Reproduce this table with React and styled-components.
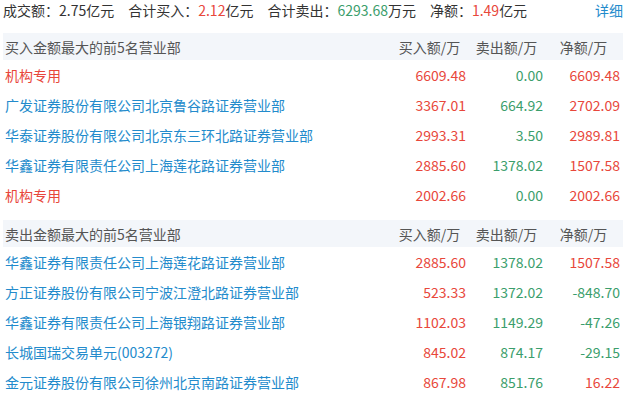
import React from "react";
import styled, { createGlobalStyle } from "styled-components";

const Global = createGlobalStyle`
  html, body { margin: 0; padding: 0; background: #fff; }
  body { font-family: "Noto Sans CJK SC", "Noto Sans", sans-serif; }
`;

const RED = "#e8473b";
const GREEN = "#3b9e6c";
const BLUE = "#238bcc";

const Page = styled.div`
  width: 620px;
  padding: 0 6px 0 3px;
  font-size: 14px;
  color: #333;
`;

const Summary = styled.div`
  display: flex;
  align-items: center;
  height: 21px;
  line-height: 21px;
  margin-bottom: 12px;
  white-space: nowrap;
`;

const SummaryItem = styled.span`
  margin-right: 14px;
`;

const Val = styled.span`
  color: ${(p) => p.$color};
`;

const DetailLink = styled.a`
  margin-left: auto;
  color: ${BLUE};
  text-decoration: none;
  cursor: pointer;
`;

const Section = styled.div`
  margin-bottom: 10px;
`;

const Row = styled.div`
  display: grid;
  grid-template-columns: 1fr 77px 77px 77px;
  align-items: center;
  padding: 0 3px 0 2px;
  height: 30px;
  white-space: nowrap;
`;

const HeadRow = styled(Row)`
  height: 27px;
  background: #f3f6fa;
  color: #555;
`;

const HeadCell = styled.div`
  text-align: ${(p) => (p.$center ? "center" : "left")};
  padding-left: ${(p) => (p.$center ? "4px" : "0")};
`;

const Name = styled.div`
  color: ${(p) => (p.$inst ? RED : BLUE)};
  cursor: pointer;
`;

const Num = styled.div`
  text-align: right;
  color: ${(p) => p.$color};
`;

const colorOf = (v) => (parseFloat(v) > 0 ? RED : GREEN);

const buyRows = [
  ["机构专用", "6609.48", "0.00", "6609.48", true],
  ["广发证券股份有限公司北京鲁谷路证券营业部", "3367.01", "664.92", "2702.09"],
  ["华泰证券股份有限公司北京东三环北路证券营业部", "2993.31", "3.50", "2989.81"],
  ["华鑫证券有限责任公司上海莲花路证券营业部", "2885.60", "1378.02", "1507.58"],
  ["机构专用", "2002.66", "0.00", "2002.66", true],
];

const sellRows = [
  ["华鑫证券有限责任公司上海莲花路证券营业部", "2885.60", "1378.02", "1507.58"],
  ["方正证券股份有限公司宁波江澄北路证券营业部", "523.33", "1372.02", "-848.70"],
  ["华鑫证券有限责任公司上海银翔路证券营业部", "1102.03", "1149.29", "-47.26"],
  ["长城国瑞交易单元(003272)", "845.02", "874.17", "-29.15"],
  ["金元证券股份有限公司徐州北京南路证券营业部", "867.98", "851.76", "16.22"],
];

function Table({ title, rows }) {
  return (
    <Section>
      <HeadRow>
        <HeadCell>{title}</HeadCell>
        <HeadCell $center>买入额/万</HeadCell>
        <HeadCell $center>卖出额/万</HeadCell>
        <HeadCell $center>净额/万</HeadCell>
      </HeadRow>
      {rows.map(([name, buy, sell, net, inst], i) => (
        <Row key={i}>
          <Name $inst={inst}>{name}</Name>
          <Num $color={RED}>{buy}</Num>
          <Num $color={GREEN}>{sell}</Num>
          <Num $color={colorOf(net)}>{net}</Num>
        </Row>
      ))}
    </Section>
  );
}

export default function App() {
  return (
    <Page>
      <Global />
      <Summary>
        <SummaryItem>成交额：2.75亿元</SummaryItem>
        <SummaryItem>
          合计买入：<Val $color={RED}>2.12</Val>亿元
        </SummaryItem>
        <SummaryItem>
          合计卖出：<Val $color={GREEN}>6293.68</Val>万元
        </SummaryItem>
        <SummaryItem>
          净额：<Val $color={RED}>1.49</Val>亿元
        </SummaryItem>
        <DetailLink>详细</DetailLink>
      </Summary>
      <Table title="买入金额最大的前5名营业部" rows={buyRows} />
      <Table title="卖出金额最大的前5名营业部" rows={sellRows} />
    </Page>
  );
}
